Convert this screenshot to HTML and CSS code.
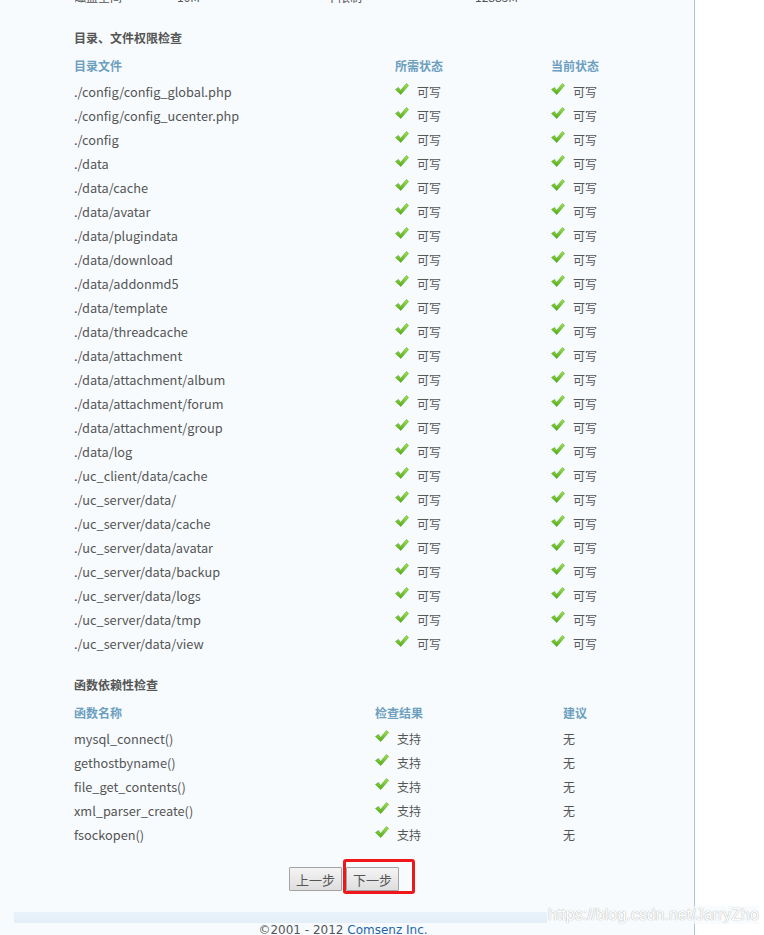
FILE: index.html
```html
<!DOCTYPE html>
<html>
<head>
  <meta charset="utf-8">
  <link rel="stylesheet" href="styles.css">
</head>
<body>
  <div class="wrap">
    <div class="main">
      <div class="row env-row">
        <span class="c1">磁盘空间</span><span class="e2">10M</span><span class="e3">不限制</span><span class="e4"><i class="ok"></i>12885M</span>
      </div>

      <h3 class="title">目录、文件权限检查</h3>
      <div class="tb dir-tb">
        <div class="row head"><span>目录文件</span><span>所需状态</span><span>当前状态</span></div>
        <div id="dir-rows"></div>
      </div>

      <h3 class="title">函数依赖性检查</h3>
      <div class="tb func-tb">
        <div class="row head"><span>函数名称</span><span>检查结果</span><span>建议</span></div>
        <div id="func-rows"></div>
      </div>
    </div>

    <div class="btns">
      <button class="btn">上一步</button>
      <span class="next-wrap">
        <button class="btn">下一步</button>
        <span class="mark"></span>
      </span>
    </div>

    <div class="band"></div>
    <div class="footer">©2001 - 2012 <a href="#">Comsenz Inc.</a></div>
  </div>
  <div class="watermark">https://blog.csdn.net/JarryZho</div>

  <script>
    var check = '<svg class="ok" width="14" height="13" viewBox="0 0 14 13"><defs><linearGradient id="g" x1="0" y1="0" x2="0" y2="1"><stop offset="0" stop-color="#a6e655"/><stop offset="1" stop-color="#4daa17"/></linearGradient></defs><path d="M0.5 6.5 L3.5 4.5 L5.5 7.5 L11.5 0.5 L13.5 2.5 L5.8 11.5 Z" fill="url(#g)" stroke="#56a41f" stroke-width="0.6"/></svg>';

    var dirs = ['./config/config_global.php', './config/config_ucenter.php', './config', './data',
      './data/cache', './data/avatar', './data/plugindata', './data/download', './data/addonmd5',
      './data/template', './data/threadcache', './data/attachment', './data/attachment/album',
      './data/attachment/forum', './data/attachment/group', './data/log', './uc_client/data/cache',
      './uc_server/data/', './uc_server/data/cache', './uc_server/data/avatar', './uc_server/data/backup',
      './uc_server/data/logs', './uc_server/data/tmp', './uc_server/data/view'];

    var funcs = ['mysql_connect()', 'gethostbyname()', 'file_get_contents()', 'xml_parser_create()', 'fsockopen()'];

    document.getElementById('dir-rows').innerHTML = dirs.map(function (d) {
      return '<div class="row"><span>' + d + '</span><span class="st">' + check + '可写</span><span class="st">' + check + '可写</span></div>';
    }).join('');

    document.getElementById('func-rows').innerHTML = funcs.map(function (f) {
      return '<div class="row"><span>' + f + '</span><span class="st">' + check + '支持</span><span class="st">无</span></div>';
    }).join('');
  </script>
</body>
</html>
```

FILE: styles.css
```css
html, body { margin: 0; padding: 0; background: #fff; }
body {
  font-family: "Noto Sans CJK SC", "Noto Sans", sans-serif;
  font-size: 12.75px;
  color: #555;
  overflow: hidden;
}
.wrap {
  position: relative;
  width: 694px;
  height: 960px;
  background: #f7fbfe;
  border-right: 1px solid #a9c9d6;
}
.main { padding-left: 74px; }

.row {
  display: flex;
  align-items: center;
  height: 24px;
  line-height: 24px;
  white-space: nowrap;
}
.env-row { margin-top: -15px; font-size: 12px; }
.env-row span { display: inline-block; }
.env-row .c1 { width: 103px; }
.env-row .e2 { width: 149px; }
.env-row .e3 { width: 124px; }
.env-row .e4 { display: flex; align-items: center; }
.env-row .e4 .ok { display: inline-block; width: 14px; height: 10px; margin-right: 11px; background: #5aa52a; }

.title {
  margin: 17px 0 4px;
  font-size: 12px;
  line-height: 24px;
  font-weight: bold;
  color: #555;
}

.row.head {
  height: 26px;
  line-height: 24px;
  align-items: flex-start;
  font-size: 12px;
  color: #6d9fbe;
  font-weight: bold;
}

.row span { display: flex; align-items: center; }
.row .st { font-size: 12px; }
.row .ok { margin: -5px 8px 0 0; flex: none; }

.dir-tb .row span:nth-child(1) { width: 321px; }
.dir-tb .row span:nth-child(2) { width: 156px; }
.func-tb .row span:nth-child(1) { width: 301px; }
.func-tb .row span:nth-child(2) { width: 188px; }

.btns {
  display: flex;
  justify-content: center;
  gap: 4px;
  margin-top: 20px;
  padding-right: 6px;
}
.btn {
  height: 24px;
  width: 53px;
  padding: 0;
  font-family: "Noto Sans CJK SC", sans-serif;
  font-size: 13px;
  color: #555;
  background: linear-gradient(#f4f4f4, #dedede);
  border: 1px solid #a3a3a3;
  border-radius: 1px;
}
.next-wrap { position: relative; display: inline-block; }
.mark {
  position: absolute;
  left: -3px;
  top: -8px;
  width: 66px;
  height: 29px;
  border: 3px solid #f0171b;
  border-radius: 3px;
}

.band {
  margin: 21px 0 0 14px;
  width: 533px;
  height: 11px;
  background: linear-gradient(#e9f3fb, #e3eef8);
}
.footer {
  text-align: center;
  font-family: "DejaVu Sans", Verdana, sans-serif;
  font-size: 12px;
  line-height: 14px;
  color: #555;
  padding-right: 8px;
}
.footer a { color: #2366a8; text-decoration: none; }

.watermark {
  position: absolute;
  left: 548px;
  top: 906px;
  font-family: "Liberation Sans", Arial, sans-serif;
  font-size: 16px;
  color: #fff;
  text-shadow: 0 0 1px #b0b0b0, 0 0 1px #c0c0c0;
  background: rgba(247, 251, 254, 0.7);
}
```
